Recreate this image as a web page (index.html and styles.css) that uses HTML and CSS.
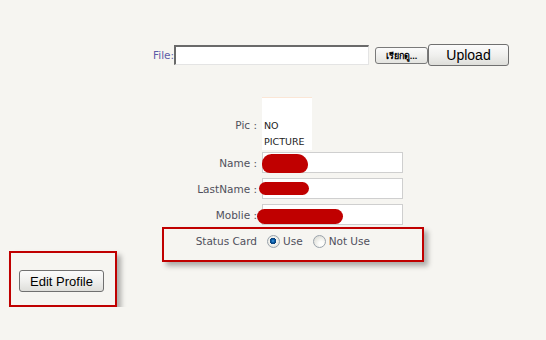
FILE: index.html
```html
<!DOCTYPE html>
<html lang="en">
<head>
    <meta charset="UTF-8">
    <meta name="viewport" content="width=device-width, initial-scale=1.0">
    <title>Edit Profile</title>
    <link rel="stylesheet" href="styles.css">
</head>
<body>
    <div class="page">
        <div class="upload-row">
            <span class="file-label">File:</span>
            <input type="text" class="file-path">
            <button class="browse-btn">เรียกดู...</button>
            <button class="upload-btn">Upload</button>
        </div>

        <div class="profile-form">
            <div class="form-row pic-row">
                <span class="form-label">Pic :</span>
                <div class="pic-box">NO<br>PICTURE</div>
            </div>
            <div class="form-row">
                <span class="form-label">Name :</span>
                <div class="field">
                    <input type="text" class="text-input">
                    <span class="scribble scribble-name"></span>
                </div>
            </div>
            <div class="form-row">
                <span class="form-label">LastName :</span>
                <div class="field">
                    <input type="text" class="text-input">
                    <span class="scribble scribble-last"></span>
                </div>
            </div>
            <div class="form-row">
                <span class="form-label">Moblie :</span>
                <div class="field">
                    <input type="text" class="text-input">
                    <span class="scribble scribble-mobile"></span>
                </div>
            </div>

            <!-- Status Card -->
            <div class="status-box">
                <span class="status-label">Status Card</span>
                <input type="radio" class="radio" name="status" checked>
                <span class="radio-text">Use</span>
                <input type="radio" class="radio" name="status">
                <span class="radio-text">Not Use</span>
            </div>
        </div>

        <div class="edit-box">
            <button class="edit-btn">Edit Profile</button>
        </div>
    </div>
</body>
</html>
```

FILE: styles.css
```css
body, html {
    margin: 0;
    padding: 0;
    background-color: #f6f5f1;
    font-family: "DejaVu Sans", sans-serif;
    font-size: 10.5px;
    color: #50505c;
}

.page {
    padding-top: 44px;
}

/* Upload row */
.upload-row {
    display: flex;
    align-items: center;
    height: 22px;
    margin-left: 153px;
}

.file-label {
    width: 21px;
    color: #5c5ca8;
}

.file-path {
    box-sizing: border-box;
    width: 195px;
    height: 20px;
    margin: 0;
    padding: 0;
    background: #ffffff;
    border-top: 2px solid #6a6a6a;
    border-left: 2px solid #6a6a6a;
    border-right: 1px solid #e4e4e4;
    border-bottom: 1px solid #e4e4e4;
}

.browse-btn {
    box-sizing: border-box;
    width: 53px;
    height: 17px;
    margin: 1px 0 0 6px;
    padding: 0;
    font-family: "Noto Sans", "DejaVu Sans", sans-serif;
    font-size: 9px;
    font-weight: bold;
    color: #000;
    background: linear-gradient(#fbfbfb, #e4e4e0);
    border: 1px solid #7a7a7a;
    border-radius: 3px;
}

.upload-btn {
    box-sizing: border-box;
    width: 81px;
    height: 22px;
    margin: -1px 0 0 0;
    padding: 0;
    font-family: "Liberation Sans", Arial, sans-serif;
    font-size: 14px;
    color: #000;
    background: linear-gradient(#fbfbfb 0%, #f0f0ee 50%, #dededa 100%);
    border: 1px solid #707070;
    border-radius: 3px;
}

/* Profile form */
.profile-form {
    margin-top: 31px;
}

.form-row {
    display: flex;
    align-items: center;
    margin-bottom: 5px;
}

.form-label {
    width: 257px;
    margin-right: 5px;
    text-align: right;
    flex-shrink: 0;
}

.pic-row {
    margin-bottom: 2px;
}

.pic-row .form-label {
    padding-top: 2px;
}

.pic-box {
    box-sizing: border-box;
    width: 50px;
    height: 53px;
    padding: 20px 0 0 2px;
    background: #ffffff;
    border-top: 1px solid #fbe6d6;
    font-size: 9.5px;
    line-height: 16px;
    color: #222;
}

.field {
    position: relative;
}

.text-input {
    box-sizing: border-box;
    display: block;
    width: 141px;
    height: 21px;
    margin: 0;
    background: #ffffff;
    border: 1px solid #cfcfcf;
}

.scribble {
    position: absolute;
    background: #c00000;
}

.scribble-name {
    left: 0;
    top: 2px;
    width: 46px;
    height: 19px;
    border-radius: 12px 14px 10px 10px;
}

.scribble-last {
    left: -3px;
    top: 4px;
    width: 50px;
    height: 13px;
    border-radius: 7px;
}

.scribble-mobile {
    left: -5px;
    top: 5px;
    width: 86px;
    height: 15px;
    border-radius: 8px;
}

/* Status box */
.status-box {
    box-sizing: border-box;
    display: flex;
    align-items: center;
    width: 262px;
    height: 35px;
    margin: -3px 0 0 162px;
    padding-bottom: 7px;
    border: 2px solid #c00000;
    box-shadow: 4px 4px 5px rgba(0, 0, 0, 0.3);
}

.status-label {
    width: 93px;
    text-align: right;
}

.radio {
    appearance: none;
    box-sizing: border-box;
    width: 13px;
    height: 13px;
    margin: 0 3px 0 10px;
    border: 1px solid #9aa3ac;
    border-radius: 50%;
    background: radial-gradient(circle at 65% 70%, #fdfdfb 20%, #d4d4cc 100%);
}

.radio:checked {
    background: radial-gradient(circle at 45% 45%, #4aa0e8 0, #0b5fa8 1.5px, #0a3e78 3px, #f4f4f0 3.5px, #d8d8d0 100%);
}

/* Edit box */
.edit-box {
    box-sizing: border-box;
    width: 108px;
    height: 56px;
    margin: -11px 0 0 9px;
    padding: 17px 0 0 8px;
    border: 2px solid #c00000;
    box-shadow: 4px 4px 5px rgba(0, 0, 0, 0.3);
}

.edit-btn {
    box-sizing: border-box;
    width: 85px;
    height: 22px;
    margin: 0;
    padding: 0;
    font-family: "Liberation Sans", Arial, sans-serif;
    font-size: 13px;
    color: #000;
    background: linear-gradient(#fbfbfb 0%, #f0f0ee 50%, #dededa 100%);
    border: 1px solid #707070;
    border-radius: 3px;
}
```
